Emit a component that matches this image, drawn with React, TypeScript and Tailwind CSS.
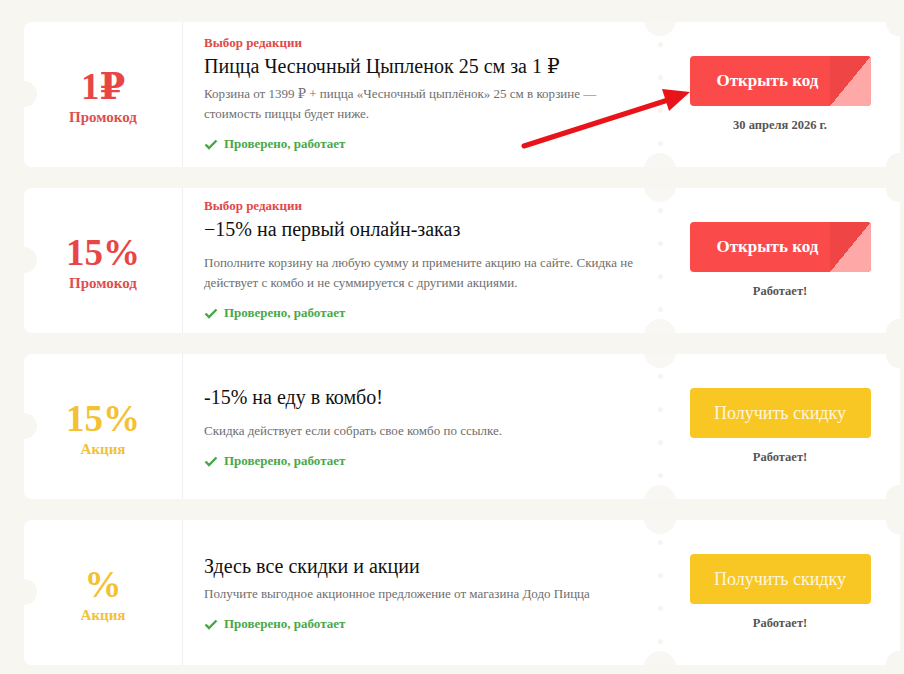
import React from 'react'

type Offer = {
  value: string
  kind: string
  promo: boolean
  editors: boolean
  title: string
  text: string
  titleGap: string
  note: string
  button: string
}

const offers: Offer[] = [
  {
    value: '1₽',
    kind: 'Промокод',
    promo: true,
    editors: true,
    title: 'Пицца Чесночный Цыпленок 25 см за 1 ₽',
    text: 'Корзина от 1399 ₽ + пицца «Чесночный цыплёнок» 25 см в корзине — стоимость пиццы будет ниже.',
    titleGap: 'mb-[5px]',
    note: '30 апреля 2026 г.',
    button: 'Открыть код',
  },
  {
    value: '15%',
    kind: 'Промокод',
    promo: true,
    editors: true,
    title: '−15% на первый онлайн-заказ',
    text: 'Пополните корзину на любую сумму и примените акцию на сайте. Скидка не действует с комбо и не суммируется с другими акциями.',
    titleGap: 'mb-[11px]',
    note: 'Работает!',
    button: 'Открыть код',
  },
  {
    value: '15%',
    kind: 'Акция',
    promo: false,
    editors: false,
    title: '-15% на еду в комбо!',
    text: 'Скидка действует если собрать свое комбо по ссылке.',
    titleGap: 'mb-[11px]',
    note: 'Работает!',
    button: 'Получить скидку',
  },
  {
    value: '%',
    kind: 'Акция',
    promo: false,
    editors: false,
    title: 'Здесь все скидки и акции',
    text: 'Получите выгодное акционное предложение от магазина Додо Пицца',
    titleGap: 'mb-[5px]',
    note: 'Работает!',
    button: 'Получить скидку',
  },
]

const Check = () => (
  <svg width="14" height="11" viewBox="0 0 14 11" className="mr-[6px] shrink-0">
    <polyline points="1.5,5.5 5,9 12.5,1.5" fill="none" stroke="#45a845" strokeWidth="2.4" />
  </svg>
)

const OfferCard = ({ o }: { o: Offer }) => (
  <div className="relative flex h-[145px] overflow-hidden rounded-lg bg-white">
    {/* notches */}
    <div className="absolute left-[-13px] top-[59px] h-[26px] w-[26px] rounded-full bg-[#f7f6f1]" />
    <div className="absolute left-[620px] top-[-18px] h-[32px] w-[32px] rounded-full bg-[#f8f7f3]" />
    <div className="absolute left-[620px] bottom-[-18px] h-[32px] w-[32px] rounded-full bg-[#f8f7f3]" />
    <div className="absolute right-[-12px] top-[-12px] h-[26px] w-[26px] rounded-full bg-[#f7f6f1]" />
    <div className="absolute right-[-12px] bottom-[-12px] h-[26px] w-[26px] rounded-full bg-[#f7f6f1]" />
    <div className="absolute left-[634px] top-[20px] flex flex-col gap-[28px]">
      <span className="h-[5px] w-[5px] rounded-full bg-[#f5f4f0]" />
      <span className="h-[5px] w-[5px] rounded-full bg-[#f5f4f0]" />
      <span className="h-[5px] w-[5px] rounded-full bg-[#f5f4f0]" />
      <span className="h-[5px] w-[5px] rounded-full bg-[#f5f4f0]" />
    </div>

    <div className="flex w-[159px] shrink-0 flex-col items-center justify-center border-r border-[#efefef] pt-[5px]">
      <div
        className={`text-[37px] font-bold leading-[40px] ${o.promo ? 'text-[#e84646]' : 'text-[#f3c132]'}`}
      >
        {o.value}
      </div>
      <div className={`text-[15px] font-bold leading-[20px] ${o.promo ? 'text-[#e04e4e]' : 'text-[#f0c13c]'}`}>
        {o.kind}
      </div>
    </div>

    <div className="flex w-[477px] shrink-0 flex-col justify-center pl-[21px] pr-[22px]">
      {o.editors && (
        <div className="text-[13px] font-bold leading-[16px] text-[#e04a4a]">Выбор редакции</div>
      )}
      <div className={`mt-[2px] text-[20px] leading-[26px] text-[#111] ${o.titleGap}`}>{o.title}</div>
      <div className="text-[13px] leading-[20px] text-[#6e6e6e]">{o.text}</div>
      <div className="mt-[10px] flex items-center text-[13px] font-bold leading-[20px] text-[#4aa84a]">
        <Check />
        Проверено, работает
      </div>
    </div>

    <div className="flex flex-1 flex-col items-center justify-center">
      {o.promo ? (
        <div className="relative flex h-[50px] w-[181px] items-center overflow-hidden rounded-[4px] bg-[#fb4a4a] pl-[27px]">
          <span className="text-[17px] font-bold text-white">{o.button}</span>
          <div className="absolute right-0 top-0 h-[50px] w-[41px] bg-[linear-gradient(to_bottom_right,#ef4545_50%,#ffa8a8_50%)]" />
        </div>
      ) : (
        <div className="flex h-[50px] w-[181px] items-center justify-center rounded-[4px] bg-[#f9c723]">
          <span className="text-[18px] text-[#fff6dc]">{o.button}</span>
        </div>
      )}
      <div className="mt-[11px] text-[12.5px] font-bold leading-[16px] text-[#555]">{o.note}</div>
    </div>
  </div>
)

export default function App() {
  return (
    <div className="relative min-h-[674px] bg-[#f7f6f1] pl-[24px] pt-[22px] font-[family-name:'Liberation_Serif','DejaVu_Serif',serif]">
      <div className="flex w-[876px] flex-col gap-[21px]">
        {offers.map((o, i) => (
          <OfferCard key={i} o={o} />
        ))}
      </div>
      <svg className="absolute left-0 top-0" width="904" height="674" viewBox="0 0 904 674">
        <line x1="524" y1="146" x2="668" y2="100" stroke="#e8141a" strokeWidth="5" strokeLinecap="round" />
        <polygon points="690,92 662,89 669,111" fill="#e8141a" />
      </svg>
    </div>
  )
}
